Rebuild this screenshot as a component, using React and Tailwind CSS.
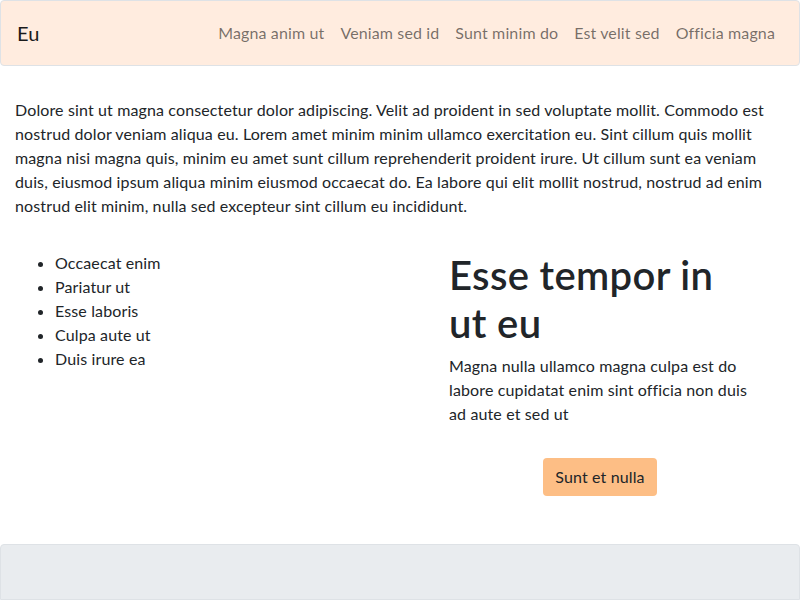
import React from "react";

const links = ["Magna anim ut", "Veniam sed id", "Sunt minim do", "Est velit sed", "Officia magna"];
const items = ["Occaecat enim", "Pariatur ut", "Esse laboris", "Culpa aute ut", "Duis irure ea"];

export default function App() {
  return (
    <div className="min-h-[600px] bg-white text-[#212529] flex flex-col tracking-[0.13px]" style={{ fontFamily: 'Lato, sans-serif' }}>
      {/* Navbar */}
      <nav className="h-[66px] bg-[#ffecdf] border border-[#dee2e6] rounded-[4px] flex items-center justify-between pl-4 pr-[16px]">
        <span className="text-[20px] text-[#1a1a1a]">Eu</span>
        <div className="flex">
          {links.map((l) => (
            <a key={l} className="px-2 text-[16px] text-black/55">{l}</a>
          ))}
        </div>
      </nav>

      <main className="flex-1 px-[15px] pt-[32px]">
        <p className="text-[16px] leading-6">
          Dolore sint ut magna consectetur dolor adipiscing. Velit ad proident in sed voluptate mollit. Commodo est nostrud dolor veniam aliqua eu. Lorem amet minim minim ullamco exercitation eu. Sint cillum quis mollit magna nisi magna quis, minim eu amet sunt cillum reprehenderit proident irure. Ut cillum sunt ea veniam duis, eiusmod ipsum aliqua minim eiusmod occaecat do. Ea labore qui elit mollit nostrud, nostrud ad enim nostrud elit minim, nulla sed excepteur sint cillum eu incididunt.
        </p>

        <div className="flex mt-[33px]">
          <ul className="w-[434px] list-disc pl-10 text-[16px] leading-6">
            {items.map((i) => (
              <li key={i}>{i}</li>
            ))}
          </ul>
          <div className="w-[302px] flex flex-col">
            <h1 className="text-[40px] leading-[48px] font-semibold tracking-[0.35px]">Esse tempor in ut eu</h1>
            <p className="mt-[7px] text-[16px] leading-6">
              Magna nulla ullamco magna culpa est do labore cupidatat enim sint officia non duis ad aute et sed ut
            </p>
            <div className="flex justify-center mt-[32px]">
              <button className="bg-[#fdbe85] rounded-[4px] px-3 h-[38px] text-[16px] text-[#212529]">Sunt et nulla</button>
            </div>
          </div>
        </div>
      </main>

      <footer className="h-[56px] bg-[#e9ecef] border border-[#dee2e6] rounded-t-[4px]"></footer>
    </div>
  );
}
